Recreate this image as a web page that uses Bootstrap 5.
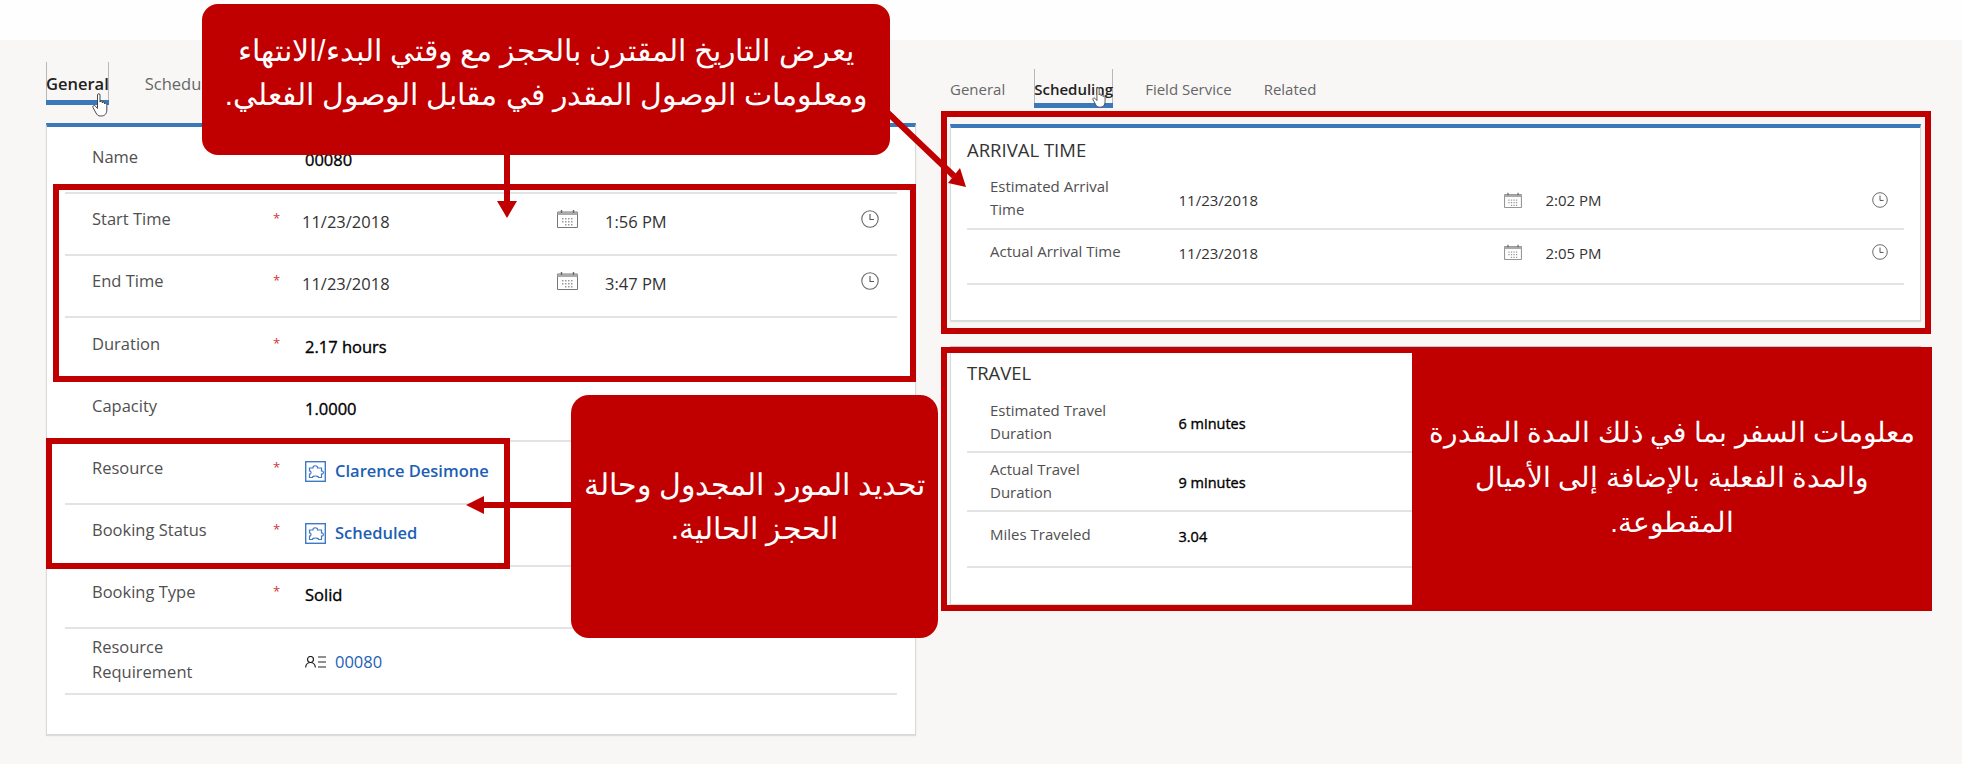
<!DOCTYPE html>
<html lang="en"><head><meta charset="utf-8"><title>Booking form</title>
<link href="https://cdn.jsdelivr.net/npm/bootstrap@5.3.0/dist/css/bootstrap.min.css" rel="stylesheet">
<style>
html,body{height:764px;overflow:hidden}
body{background:#f8f7f6;font-family:"Open Sans","Liberation Sans",sans-serif;position:relative;color:#000}
.topband{height:40px;background:#fefefe}
.stage{padding-left:46px;gap:34px}
.leftcol{width:870px}.rightcol{width:971px}
.tabbar{gap:36px;height:83px;padding-top:22px;font-size:16.5px;color:#666}
.rightcol .tabbar{gap:32px;font-size:15px;padding-top:29px;height:84px}
.tabitem{padding-top:10px;height:43px;white-space:nowrap}
.rightcol .tabitem{height:39px;padding-top:9px}
.tabfirst{margin-right:-3px}
.tabon{color:#222;font-weight:600;border-bottom:5px solid #3b78b9;box-shadow:inset 1px 0 #b8b8b8,inset -1px 0 #b8b8b8}
.formcard{border:1px solid #d9d9d9;border-top:4px solid #3b78b9;border-radius:0;background:#fff;box-shadow:0 1px 1px #ddd}
.leftform{height:612px;padding:4.5px 18px 0}
.frow{height:62.2px;border-bottom:2px solid #e3e3e3;font-size:16.5px;line-height:25px}
.frow.tall{height:66px}
.flabel{width:181px;margin-left:27px;padding-top:12.5px;color:#505050;flex:none}
.tall .flabel{padding-top:4.5px}
.fstar{width:29px;flex:none;color:#d13438;font-size:13px;padding-top:12.5px}
.fval{padding-top:15.500px;flex:none;color:#111;margin-left:3px}
.tall .fval{padding-top:19.500px}
.strong{color:#000;-webkit-text-stroke:.35px #000}
.fval.fdate{width:255px;color:#333;margin-left:0}
.fval.ftime{width:256px;color:#333;margin-left:0}
.ficon{flex:none;margin-top:15px}
.clockicon{margin-top:16.500px}
.gapicon{margin-right:27px}
.flink{color:#1d5fb4;font-weight:600;text-decoration:none}
.flink.plain{font-weight:400}
.ic-left{margin-right:9px;vertical-align:-5px}
.ic-req{vertical-align:0}
.arrivalcard{height:197px;padding:10px 16px 0;margin-top:0}
.travelcard{height:259px;margin-top:25px;padding:14px 16px 0;border-top:1px solid #b9c5d6}
.sectitle{font-size:18.5px;line-height:24px;color:#333;margin-bottom:6px}
.travelcard .sectitle{margin-bottom:9px}
.rrow{border-bottom:2px solid #e3e3e3;font-size:15px;line-height:23px;height:62px}
.rrow.short{height:55px}
.travelcard .rrow{height:59px}.travelcard .rrow.short{height:56px}
.rlabel{width:188.5px;margin-left:23px;flex:none;color:#505050;padding-top:7px}
.short .rlabel{padding-top:10px}
.rval{padding-top:21px;flex:none;color:#333}
.short .rval{padding-top:12px}
.rval.strong{color:#000;font-size:14.5px}
.travelcard .rlabel{padding-top:4.5px}
.travelcard .rval{padding-top:18px}
.travelcard .short .rlabel{padding-top:11px}
.travelcard .short .rval{padding-top:13px}
.rdate{width:325px}.rtime{width:326px}
.ricon{flex:none;margin-top:24px}
.short .ricon{margin-top:14px}
.rgap{margin-right:24px}
.redbox{position:absolute;border:6px solid #c00000;pointer-events:none}
.box-a{left:53px;top:184px;width:863px;height:198px}
.box-b{left:46px;top:438px;width:464px;height:131px}
.box-c{left:941px;top:111px;width:990px;height:223px}
.box-d{left:941px;top:347px;width:991px;height:264px}
.arrows{position:absolute;left:0;top:0}
.callout{position:absolute;background:#c00000;color:#fff;text-align:center;font-family:"Liberation Sans",Arial,sans-serif;font-size:30px;line-height:44px;display:flex;align-items:center;justify-content:center}
.call-a{left:202px;top:4px;width:688px;height:151px;border-radius:16px;padding-bottom:13px;font-size:29.5px}
.call-b{left:571px;top:395px;width:367px;height:243px;border-radius:18px;padding-bottom:20px}
.call-c{left:1412px;top:347px;width:520px;height:264px;border-radius:0 2px 2px 0;font-size:27.5px;line-height:45px;padding-bottom:3px}
.pointer{position:absolute}
.hand-a{left:92px;top:93px}.hand-b{left:1092px;top:87px}
</style></head>
<body>
<svg width="0" height="0" class="position-absolute">
<symbol id="cal" viewBox="0 0 21 19"><path d="M.5 3h20v15.500H.5z" fill="none" stroke="#777"/><path d="M.5 3h20v3H.5z" fill="#aaa"/><path d="M4.500 1v3M16.500 1v3" stroke="#666" stroke-width="1.400"/><path d="M5 9h1.500v1.500H5zM8 9h1.500v1.500H8zM11 9h1.500v1.500H11zM14 9h1.500v1.500H14zM5 12h1.500v1.500H5zM8 12h1.500v1.500H8zM11 12h1.500v1.500H11zM14 12h1.500v1.500H14zM8 15h1.500v1.500H8zM11 15h1.500v1.500H11zM14 15h1.500v1.500H14z" fill="#999"/></symbol>
<symbol id="clk" viewBox="0 0 18 18"><circle cx="9" cy="9" r="8.200" fill="none" stroke="#666" stroke-width="1.100"/><path d="M9 4v5.500h4" fill="none" stroke="#555" stroke-width="1.100"/></symbol>
<symbol id="puz" viewBox="0 0 21 21"><rect x=".7" y=".7" width="19.600" height="19.600" fill="none" stroke="#3f79c4" stroke-width="1.400"/><path d="M4.500 7H8C7.500 4 13 4 12.500 7H16.500v3C19 9.500 19 13.500 16.500 13v3.500h-3C14 14.500 7 14.500 7.500 16.500h-3V13C6.500 13.500 6.500 9.500 4.500 10z" fill="none" stroke="#3f79c4" stroke-width="1.200"/></symbol>
<symbol id="req" viewBox="0 0 21 12"><circle cx="5.500" cy="3.500" r="3" fill="none" stroke="#222" stroke-width="1.200"/><path d="M.6 11.500c.4-3.500 2.200-5 4.900-5s4.500 1.500 4.900 5" fill="none" stroke="#222" stroke-width="1.200"/><path d="M13 1h8M13 6h8M13 11h8" stroke="#222" stroke-width="1.200"/></symbol>
<symbol id="hand" viewBox="0 0 18 24"><path d="M5.500 2c0-1.700 2.500-1.700 2.500 0v7c0-1.400 2.300-1.400 2.300 0v1c0-1.300 2.300-1.300 2.300 0v1c0-1.200 2.200-1.200 2.200.2V17c0 3.500-2 6-5.500 6H8.500c-2.500 0-3.500-1.200-4.500-3L1 14.500c-.8-1.700 1.300-2.800 2.500-1.300l2 2.300z" fill="#fff" stroke="#333" stroke-width=".9"/></symbol>
</svg>

<div class="topband"></div>
<div class="d-flex stage">
  <div class="leftcol">
    <nav class="d-flex tabbar">
      <div class="tabitem tabon">General</div><div class="tabitem">Scheduling</div>
    </nav>
    <div class="card formcard leftform">
      <div class="frow d-flex"><div class="flabel">Name</div><div class="fstar"></div><div class="fval strong">00080</div></div>
      <div class="frow d-flex"><div class="flabel">Start Time</div><div class="fstar">*</div><div class="fval fdate">11/23/2018</div><svg class="ficon gapicon" width="21" height="19"><use href="#cal"/></svg><div class="fval ftime">1:56 PM</div><svg class="ficon clockicon" width="18" height="18"><use href="#clk"/></svg></div>
      <div class="frow d-flex"><div class="flabel">End Time</div><div class="fstar">*</div><div class="fval fdate">11/23/2018</div><svg class="ficon gapicon" width="21" height="19"><use href="#cal"/></svg><div class="fval ftime">3:47 PM</div><svg class="ficon clockicon" width="18" height="18"><use href="#clk"/></svg></div>
      <div class="frow d-flex"><div class="flabel">Duration</div><div class="fstar">*</div><div class="fval strong">2.17 hours</div></div>
      <div class="frow d-flex"><div class="flabel">Capacity</div><div class="fstar"></div><div class="fval strong">1.0000</div></div>
      <div class="frow d-flex"><div class="flabel">Resource</div><div class="fstar">*</div><div class="fval"><svg class="ic-left" width="21" height="21"><use href="#puz"/></svg><a class="flink" href="#">Clarence Desimone</a></div></div>
      <div class="frow d-flex"><div class="flabel">Booking Status</div><div class="fstar">*</div><div class="fval"><svg class="ic-left" width="21" height="21"><use href="#puz"/></svg><a class="flink" href="#">Scheduled</a></div></div>
      <div class="frow d-flex"><div class="flabel">Booking Type</div><div class="fstar">*</div><div class="fval strong">Solid</div></div>
      <div class="frow tall d-flex"><div class="flabel">Resource<br>Requirement</div><div class="fstar"></div><div class="fval"><svg class="ic-left ic-req" width="21" height="12"><use href="#req"/></svg><a class="flink plain" href="#">00080</a></div></div>
    </div>
  </div>
  <div class="rightcol">
    <nav class="d-flex tabbar">
      <div class="tabitem tabfirst">General</div><div class="tabitem tabon">Scheduling</div><div class="tabitem">Field Service</div><div class="tabitem">Related</div>
    </nav>
    <div class="card formcard arrivalcard">
      <div class="sectitle">ARRIVAL TIME</div>
      <div class="rrow d-flex"><div class="rlabel">Estimated Arrival<br>Time</div><div class="rval rdate">11/23/2018</div><svg class="ricon rgap" width="18" height="16"><use href="#cal"/></svg><div class="rval rtime">2:02 PM</div><svg class="ricon" width="16" height="16"><use href="#clk"/></svg></div>
      <div class="rrow short d-flex"><div class="rlabel">Actual Arrival Time</div><div class="rval rdate">11/23/2018</div><svg class="ricon rgap" width="18" height="16"><use href="#cal"/></svg><div class="rval rtime">2:05 PM</div><svg class="ricon" width="16" height="16"><use href="#clk"/></svg></div>
    </div>
    <div class="card formcard travelcard">
      <div class="sectitle">TRAVEL</div>
      <div class="rrow d-flex"><div class="rlabel">Estimated Travel<br>Duration</div><div class="rval strong">6 minutes</div></div>
      <div class="rrow d-flex"><div class="rlabel">Actual Travel<br>Duration</div><div class="rval strong">9 minutes</div></div>
      <div class="rrow short d-flex"><div class="rlabel">Miles Traveled</div><div class="rval strong">3.04</div></div>
    </div>
  </div>
</div>

<svg class="pointer hand-a" width="18" height="24"><use href="#hand"/></svg>
<svg class="pointer hand-b" width="16" height="21"><use href="#hand"/></svg>
<div class="redbox box-a"></div>
<div class="redbox box-b"></div>
<div class="redbox box-c"></div>
<div class="redbox box-d"></div>
<svg class="arrows" width="1962" height="764">
  <path d="M507 150v52M575 505h-92M888 113l66 63" stroke="#c00000" stroke-width="6" fill="none"/>
  <path d="M497 201h20l-10 17zM484 496v18l-18-9zM948 183l18 4-6-19z" fill="#c00000"/>
</svg>
<div class="callout call-a" dir="rtl"><div>يعرض التاريخ المقترن بالحجز مع وقتي البدء/الانتهاء<br>ومعلومات الوصول المقدر في مقابل الوصول الفعلي.</div></div>
<div class="callout call-b" dir="rtl"><div>تحديد المورد المجدول وحالة<br>الحجز الحالية.</div></div>
<div class="callout call-c" dir="rtl"><div>معلومات السفر بما في ذلك المدة المقدرة<br>والمدة الفعلية بالإضافة إلى الأميال<br>المقطوعة.</div></div>
<script src="https://cdn.jsdelivr.net/npm/bootstrap@5.3.0/dist/js/bootstrap.bundle.min.js"></script>
</body></html>
